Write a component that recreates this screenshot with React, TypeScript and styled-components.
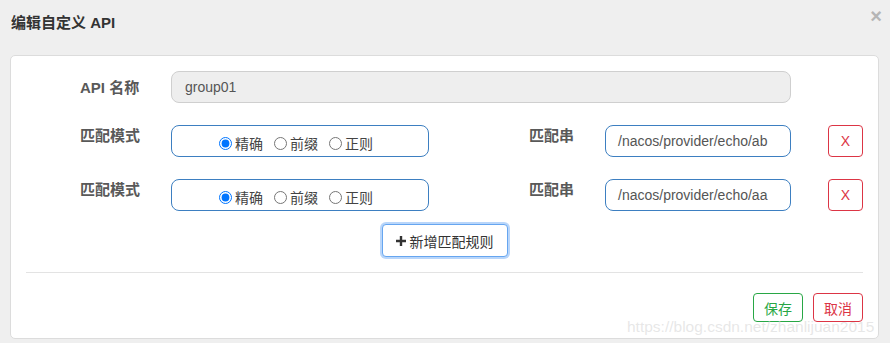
import React from "react";
import styled, { createGlobalStyle } from "styled-components";

const Global = createGlobalStyle`
  html, body { margin: 0; padding: 0; }
  body {
    background: #efefef;
    font-family: "Liberation Sans", "Noto Sans CJK SC", sans-serif;
    color: #333;
  }
  * { box-sizing: border-box; }
`;

const Dialog = styled.div`
  position: relative;
  width: 890px;
  height: 343px;
  background: #efefef;
  overflow: hidden;
`;

const Header = styled.div`
  height: 55px;
  display: flex;
  align-items: flex-start;
  justify-content: space-between;
  padding: 13px 8px 0 11px;
`;

const Title = styled.h4`
  margin: 0;
  font-size: 15px;
  line-height: 20px;
  font-weight: bold;
  color: #333;
`;

const Close = styled.span`
  font-size: 20px;
  line-height: 20px;
  margin-top: -7px;
  font-weight: bold;
  color: #b5b5b5;
`;

const Card = styled.div`
  margin: 0 11px 0 10px;
  height: 284px;
  background: #fff;
  border: 1px solid #dcdcdc;
  border-radius: 5px;
  padding: 15px 15px 0 15px;
  display: flex;
  flex-direction: column;
`;

const Row = styled.div<{ $gap: number }>`
  display: flex;
  align-items: flex-start;
  padding-left: 54px;
  margin-bottom: ${(p) => p.$gap}px;
`;

const Label = styled.label<{ $w: number; $top: number; $ml?: number }>`
  width: ${(p) => p.$w}px;
  margin-left: ${(p) => p.$ml ?? 0}px;
  padding-top: ${(p) => p.$top}px;
  font-size: 15px;
  line-height: 20px;
  font-weight: bold;
  color: #595959;
  white-space: nowrap;
`;

const TextInput = styled.div<{ $w: number; $disabled?: boolean }>`
  width: ${(p) => p.$w}px;
  height: 32px;
  display: flex;
  align-items: center;
  padding-left: ${(p) => (p.$disabled ? 13 : 12)}px;
  font-size: 14px;
  color: #555;
  border-radius: 8px;
  border: 1px solid ${(p) => (p.$disabled ? "#cfcfcf" : "#3d7fc1")};
  background: ${(p) => (p.$disabled ? "#eeeeee" : "#fff")};
`;

const RadioBox = styled.div`
  width: 258px;
  height: 32px;
  border: 1px solid #3d7fc1;
  border-radius: 8px;
  display: flex;
  align-items: center;
  justify-content: center;
  padding: 4px 8px 0 0;
  gap: 11px;
`;

const RadioItem = styled.label`
  display: flex;
  align-items: center;
  font-size: 14px;
  color: #444;
  input {
    margin: 0 3px 0 0;
    width: 13px;
    height: 13px;
  }
`;

const OutlineButton = styled.button<{ $color: string; $w: number; $h: number; $ml?: number }>`
  width: ${(p) => p.$w}px;
  height: ${(p) => p.$h}px;
  margin-left: ${(p) => p.$ml ?? 0}px;
  border: 1px solid ${(p) => p.$color};
  color: ${(p) => p.$color};
  background: #fff;
  border-radius: 4px;
  font-family: inherit;
  font-size: 14px;
  padding: 0;
  display: flex;
  align-items: center;
  justify-content: center;
`;

const AddWrap = styled.div`
  display: flex;
  justify-content: center;
  margin-top: -1px;
`;

const AddButton = styled.button`
  width: 126px;
  height: 33px;
  border: 1px solid #66a6f0;
  box-shadow: 0 0 0 2px rgba(100, 165, 245, 0.45);
  border-radius: 4px;
  background: #fff;
  font-family: inherit;
  font-size: 14px;
  color: #333;
  display: flex;
  align-items: center;
  justify-content: center;
  gap: 4px;
  padding: 0;
`;

const Divider = styled.div`
  height: 1px;
  background: #e3e3e3;
  margin-top: 15px;
`;

const Footer = styled.div`
  display: flex;
  justify-content: flex-end;
  gap: 10px;
  margin-top: 20px;
  padding-right: 0;
`;

const Watermark = styled.div`
  position: absolute;
  left: 627px;
  top: 315px;
  font-size: 15.5px;
  line-height: 24px;
  color: rgba(215, 215, 215, 0.6);
  white-space: nowrap;
  pointer-events: none;
`;

const Plus = () => (
  <svg width="10" height="10" viewBox="0 0 10 10">
    <path d="M3.8 0h2.4v3.8H10v2.4H6.2V10H3.8V6.2H0V3.8h3.8z" fill="#333" />
  </svg>
);

const MatchRow = ({ value, gap }: { value: string; gap: number }) => (
  <Row $gap={gap}>
    <Label $w={91} $top={1}>匹配模式</Label>
    <RadioBox>
      <RadioItem>
        <input type="radio" name={value} defaultChecked />精确
      </RadioItem>
      <RadioItem>
        <input type="radio" name={value} />前缀
      </RadioItem>
      <RadioItem>
        <input type="radio" name={value} />正则
      </RadioItem>
    </RadioBox>
    <Label $w={76} $top={1} $ml={100}>匹配串</Label>
    <TextInput $w={186}>{value}</TextInput>
    <OutlineButton $color="#dc3545" $w={35} $h={32} $ml={37}>X</OutlineButton>
  </Row>
);

export default function App() {
  return (
    <Dialog>
      <Global />
      <Header>
        <Title>编辑自定义 API</Title>
        <Close>×</Close>
      </Header>
      <Card>
        <Row $gap={22}>
          <Label $w={91} $top={7}>API 名称</Label>
          <TextInput $w={620} $disabled>group01</TextInput>
        </Row>
        <MatchRow value="/nacos/provider/echo/ab" gap={22} />
        <MatchRow value="/nacos/provider/echo/aa" gap={14} />
        <AddWrap>
          <AddButton>
            <Plus />
            新增匹配规则
          </AddButton>
        </AddWrap>
        <Divider />
        <Footer>
          <OutlineButton $color="#28a745" $w={50} $h={29}>保存</OutlineButton>
          <OutlineButton $color="#dc3545" $w={50} $h={29}>取消</OutlineButton>
        </Footer>
      </Card>
      <Watermark>https://blog.csdn.net/zhanlijuan2015</Watermark>
    </Dialog>
  );
}
